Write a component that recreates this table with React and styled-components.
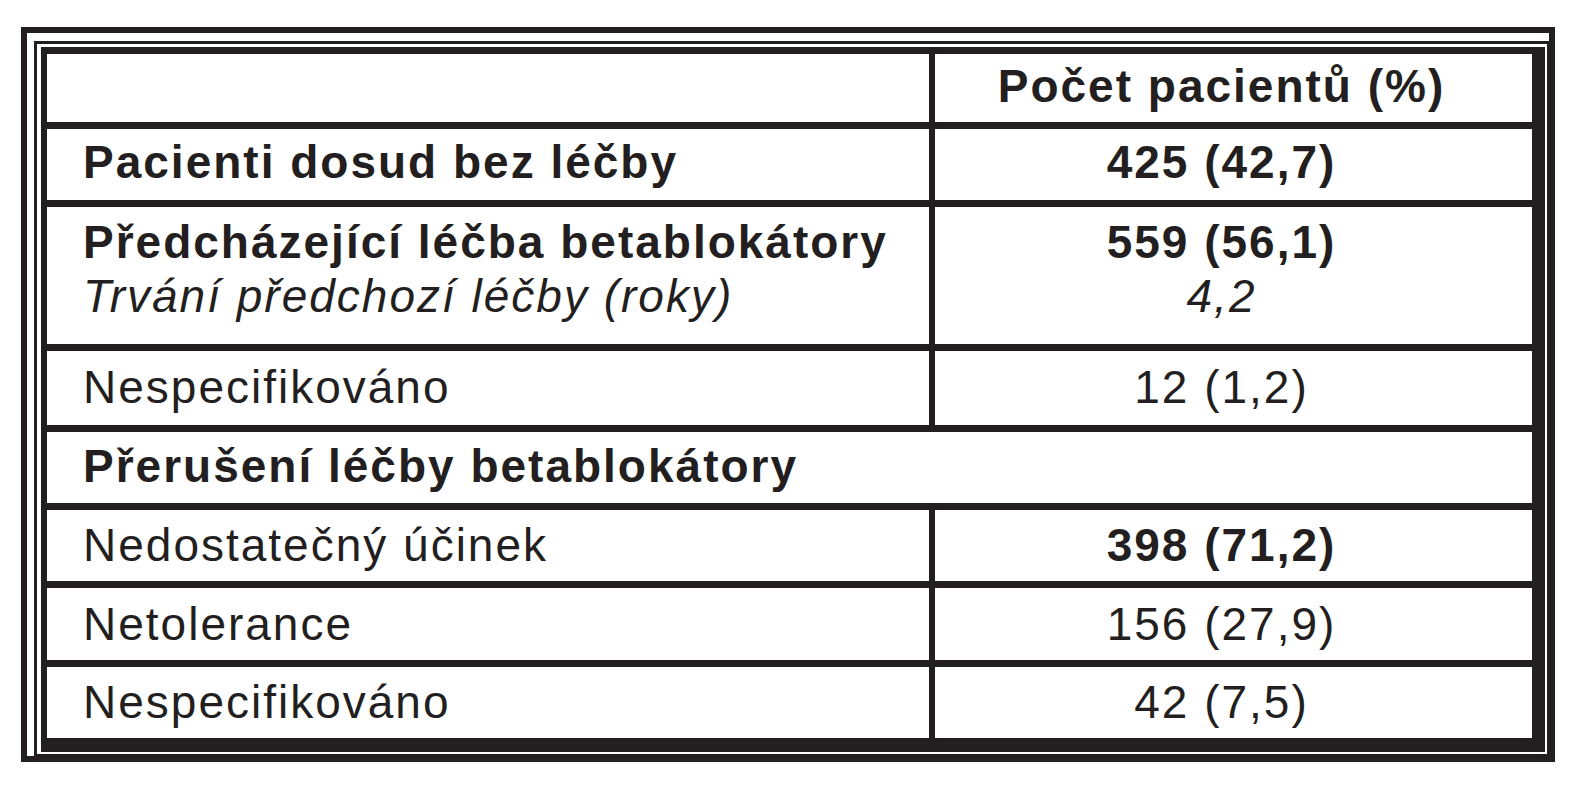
import React from 'react';
import styled, { createGlobalStyle } from 'styled-components';

const GlobalStyle = createGlobalStyle`
  * {
    box-sizing: border-box;
  }
  body {
    margin: 0;
    background: #ffffff;
    font-family: "Liberation Sans", Arial, Helvetica, sans-serif;
    color: #231f20;
  }
`;

const Page = styled.div`
  padding: 27px 0 0 21px;
  width: 1586px;
  height: 800px;
`;

// outer heavy frame, with a white gap and a thin rule inside it
const Frame = styled.div`
  display: inline-block;
  border: 6px solid #231f20;
  padding: 8px 0 0 7px;
`;

const ThinFrame = styled.div`
  border-style: solid;
  border-color: #231f20;
  border-width: 3px 2px 2px 3px;
  padding: 3px 2px 2px 4px;
`;

const Table = styled.div`
  width: 1504px;
  border-style: solid;
  border-color: #231f20;
  border-width: 7px 13px 14px 6px;
  display: flex;
  flex-direction: column;
`;

const Row = styled.div`
  display: grid;
  grid-template-columns: ${p => (p.$span ? '1fr' : '888px 597px')};
  height: ${p => p.$h}px;
  border-bottom: ${p => (p.$last ? 'none' : '7px solid #231f20')};
  box-sizing: content-box;
`;

const LabelCell = styled.div`
  display: flex;
  flex-direction: column;
  justify-content: ${p => (p.$top ? 'flex-start' : 'center')};
  padding: ${p => (p.$top ? `${p.$top}px` : '0')} 0 0 36px;
  border-right: ${p => (p.$span ? 'none' : '6px solid #231f20')};
`;

const ValueCell = styled.div`
  display: flex;
  flex-direction: column;
  align-items: center;
  justify-content: ${p => (p.$top ? 'flex-start' : 'center')};
  padding: ${p => (p.$top ? `${p.$top}px` : '0')} 24px 0 0;
`;

const Text = styled.span`
  display: block;
  font-size: 46px;
  line-height: 54px;
  letter-spacing: 2px;
  white-space: nowrap;
  font-weight: ${p => (p.$bold ? 700 : 400)};
  font-style: ${p => (p.$italic ? 'italic' : 'normal')};
  margin-top: ${p => p.$shift || 0}px;
`;

const rows = [
  { label: 'Pacienti dosud bez léčby', labelBold: true, value: '425 (42,7)', valueBold: true, h: 71, shift: -5 },
  {
    label: 'Předcházející léčba betablokátory',
    labelBold: true,
    sub: 'Trvání předchozí léčby (roky)',
    value: '559 (56,1)',
    valueBold: true,
    subValue: '4,2',
    h: 137,
    top: 8,
  },
  { label: 'Nespecifikováno', value: '12 (1,2)', h: 74, shift: -3 },
  { label: 'Přerušení léčby betablokátory', labelBold: true, span: true, h: 71, shift: -3 },
  { label: 'Nedostatečný účinek', value: '398 (71,2)', valueBold: true, h: 71, shift: -1 },
  { label: 'Netolerance', value: '156 (27,9)', h: 72, shift: -1 },
  { label: 'Nespecifikováno', value: '42 (7,5)', h: 71, shift: -1 },
];

const App = () => {
  return (
    <Page>
      <GlobalStyle />
      <Frame>
        <ThinFrame>
          <Table>
            <Row $h={68}>
              <LabelCell />
              <ValueCell>
                <Text $bold $shift={-4}>Počet pacientů (%)</Text>
              </ValueCell>
            </Row>

            {rows.map((r, i) => (
              <Row key={i} $h={r.h} $span={r.span} $last={i === rows.length - 1}>
                <LabelCell $span={r.span} $top={r.top}>
                  <Text $bold={r.labelBold} $shift={r.shift}>{r.label}</Text>
                  {r.sub && <Text $italic>{r.sub}</Text>}
                </LabelCell>
                {!r.span && (
                  <ValueCell $top={r.top}>
                    <Text $bold={r.valueBold} $shift={r.shift}>{r.value}</Text>
                    {r.subValue && <Text $italic>{r.subValue}</Text>}
                  </ValueCell>
                )}
              </Row>
            ))}
          </Table>
        </ThinFrame>
      </Frame>
    </Page>
  );
};

export default App;
